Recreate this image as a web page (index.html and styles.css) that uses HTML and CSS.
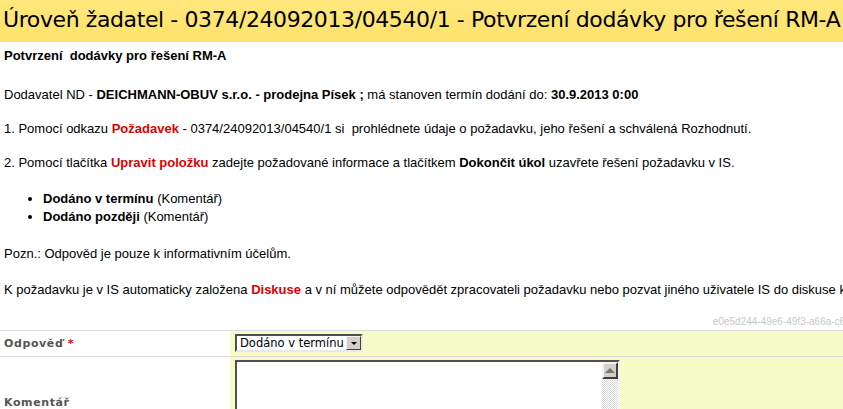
FILE: index.html
```html
<!DOCTYPE html>
<html lang="cs">
<head>
<meta charset="UTF-8" />
<title>Potvrzení dodávky pro řešení RM-A</title>
<link rel="stylesheet" href="styles.css">
</head>
<body>

<div class="page">
  <div class="title-bar">Úroveň žadatel - 0374/24092013/04540/1 - Potvrzení dodávky pro řešení RM-A</div>

  <div class="content">
    <h2 class="heading">Potvrzení&nbsp; dodávky pro řešení RM-A</h2>

    <p>Dodavatel ND - <b>DEICHMANN-OBUV s.r.o. - prodejna Písek ;</b> má stanoven termín dodání do: <b>30.9.2013 0:00</b></p>

    <p>1. Pomocí odkazu <a class="link" href="#">Požadavek</a> - 0374/24092013/04540/1 si&nbsp; prohlédnete údaje o požadavku, jeho řešení a schválená Rozhodnutí.</p>

    <p>2. Pomocí tlačítka <a class="link" href="#">Upravit položku</a> zadejte požadované informace a tlačítkem <b>Dokončit úkol</b> uzavřete řešení požadavku v IS.</p>

    <ul class="options">
      <li><b>Dodáno v termínu</b> (Komentář)</li>
      <li><b>Dodáno později</b> (Komentář)</li>
    </ul>

    <p class="note">Pozn.: Odpověd je pouze k informativním účelům.</p>

    <p>K požadavku je v IS automaticky založena <a class="link" href="#">Diskuse</a> a v ní můžete odpovědět zpracovateli požadavku nebo pozvat jiného uživatele IS do diskuse k požadavku.</p>
  </div>

  <div class="guid">e0e5d244-49e6-49f3-a66a-c61e0f2b7d93</div>

  <div class="form">
    <div class="form-row">
      <div class="form-label"><span>Odpověď <span class="req">*</span></span></div>
      <div class="form-value">
        <div class="select">
          <span class="select-text">Dodáno v termínu</span>
          <span class="select-arrow"></span>
        </div>
      </div>
    </div>
    <div class="form-row">
      <div class="form-label"><span>Komentář</span></div>
      <div class="form-value">
        <div class="textarea">
          <textarea></textarea>
          <div class="scrollbar">
            <div class="scroll-btn"><span class="scroll-up"></span></div>
            <div class="scroll-track"></div>
          </div>
        </div>
      </div>
    </div>
  </div>
</div>

</body>
</html>
```

FILE: styles.css
```css
body {
  margin: 0;
  background: #fff;
  color: #000;
  font-family: "Liberation Sans", Arial, sans-serif;
  font-size: 13px;
  overflow: hidden;
}

.page {
  width: 902px;
}

.title-bar {
  height: 42px;
  line-height: 40px;
  padding-left: 3px;
  background: linear-gradient(#ffe77c, #ffe26c);
  font-family: "DejaVu Sans", Verdana, sans-serif;
  font-size: 22px;
  letter-spacing: -0.4px;
  white-space: nowrap;
}

.content {
  padding: 5px 4px 0;
  white-space: nowrap;
}

.heading {
  margin: 0 0 21px;
  font-size: 13px;
  line-height: 18px;
}

.content p {
  margin: 0 0 16px;
  line-height: 18px;
}

.content p.note {
  margin-bottom: 18px;
}

.link {
  color: #e00000;
  font-weight: bold;
  text-decoration: none;
}

.options {
  margin: 18px 0 19px;
  padding-left: 39px;
  line-height: 18px;
}

.guid {
  margin-top: 17px;
  padding-right: 4px;
  text-align: right;
  font-size: 10px;
  line-height: 12px;
  color: #c8c8c8;
}

.form {
  margin-top: 2px;
  border-top: 1px solid #dcdcdc;
}

.form-row {
  display: flex;
  border-bottom: 1px solid #dcdcdc;
}

.form-label {
  width: 226px;
  padding-left: 4px;
  display: flex;
  align-items: center;
  font-family: "DejaVu Sans", Verdana, sans-serif;
  font-size: 11px;
  font-weight: bold;
  letter-spacing: 0.6px;
  color: #555;
}

.req {
  color: #e00000;
}

.form-value {
  flex: 1;
  padding: 3px 5px 4px;
  background: #f7fcc6;
}

.select {
  display: flex;
  width: 128px;
  height: 18px;
  box-sizing: border-box;
  border: 2px solid;
  border-color: #505050 #e8e8e8 #e8e8e8 #505050;
  background: #fff;
}

.select-text {
  flex: 1;
  padding-left: 3px;
  font-family: "DejaVu Sans", Verdana, sans-serif;
  font-size: 11.5px;
  line-height: 14px;
}

.select-arrow {
  width: 15px;
  box-sizing: border-box;
  border: 1px solid;
  border-color: #f4f4f4 #404040 #404040 #f4f4f4;
  background: #d4d0c8;
  display: flex;
  align-items: center;
  justify-content: center;
}

.select-arrow::after {
  content: '';
  border-left: 3px solid transparent;
  border-right: 3px solid transparent;
  border-top: 3px solid #000;
}

.textarea {
  display: flex;
  width: 385px;
  height: 84px;
  box-sizing: border-box;
  border: 2px solid;
  border-color: #505050 #f4f4f4 #f4f4f4 #505050;
  background: #fff;
}

.textarea textarea {
  flex: 1;
  border: none;
  resize: none;
  padding: 2px;
  font-family: "DejaVu Sans", Verdana, sans-serif;
  font-size: 11px;
  outline: none;
}

.scrollbar {
  width: 16px;
  display: flex;
  flex-direction: column;
}

.scroll-btn {
  height: 17px;
  box-sizing: border-box;
  border: 2px solid;
  border-color: #f4f4f4 #404040 #404040 #f4f4f4;
  background: #d4d0c8;
  display: flex;
  align-items: center;
  justify-content: center;
}

.scroll-up {
  border-left: 5px solid transparent;
  border-right: 5px solid transparent;
  border-bottom: 5px solid #777;
  margin-bottom: 1px;
}

.scroll-track {
  flex: 1;
  background: repeating-conic-gradient(#d8d8d8 0% 25%, #fff 0% 50%) 0 0 / 2px 2px;
}
```
